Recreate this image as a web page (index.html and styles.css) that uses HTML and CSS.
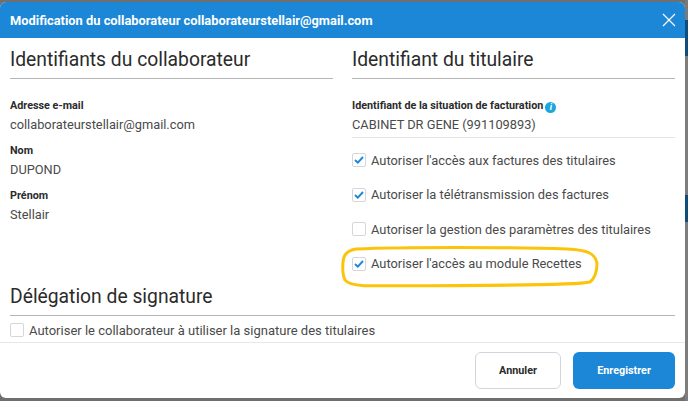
FILE: index.html
```html
<!DOCTYPE html>
<html>

<head>
  <title>Modification du collaborateur</title>
  <link rel="stylesheet" href="styles.css">
</head>

<body>
  <div class="backdrop">
    <div class="strip">
      <div class="strip-a"></div>
      <div class="strip-b"></div>
      <div class="strip-c"></div>
      <div class="strip-d"></div>
      <div class="strip-e"></div>
    </div>
  </div>

  <div class="modal">
    <div class="modal-header">
      <span class="modal-title">Modification du collaborateur collaborateurstellair@gmail.com</span>
      <svg class="close-icon" width="14" height="14" viewBox="0 0 14 14">
        <path d="M1 1L13 13M13 1L1 13" stroke="#ffffff" stroke-width="1.2" fill="none" />
      </svg>
    </div>

    <div class="modal-body">
      <div class="columns">
        <div class="column">
          <h2 class="section-title">Identifiants du collaborateur</h2>
          <div class="field field-first">
            <div class="field-label">Adresse e-mail</div>
            <div class="field-value">collaborateurstellair@gmail.com</div>
          </div>
          <div class="field">
            <div class="field-label">Nom</div>
            <div class="field-value">DUPOND</div>
          </div>
          <div class="field">
            <div class="field-label">Prénom</div>
            <div class="field-value">Stellair</div>
          </div>
        </div>

        <div class="column">
          <h2 class="section-title">Identifiant du titulaire</h2>
          <div class="field field-first field-lined">
            <div class="field-label">Identifiant de la situation de facturation<span class="info-icon">i</span></div>
            <div class="field-value">CABINET DR GENE (991109893)</div>
          </div>
          <div class="check-list">
            <div class="check-row">
              <span class="checkbox">
                <svg width="10" height="8" viewBox="0 0 10 8"><path d="M1 4L3.8 6.6L9 1" stroke="#1b87d6" stroke-width="1.9" fill="none" /></svg>
              </span>
              Autoriser l'accès aux factures des titulaires
            </div>
            <div class="check-row">
              <span class="checkbox">
                <svg width="10" height="8" viewBox="0 0 10 8"><path d="M1 4L3.8 6.6L9 1" stroke="#1b87d6" stroke-width="1.9" fill="none" /></svg>
              </span>
              Autoriser la télétransmission des factures
            </div>
            <div class="check-row">
              <span class="checkbox"></span>
              Autoriser la gestion des paramètres des titulaires
            </div>
            <div class="check-row">
              <span class="checkbox">
                <svg width="10" height="8" viewBox="0 0 10 8"><path d="M1 4L3.8 6.6L9 1" stroke="#1b87d6" stroke-width="1.9" fill="none" /></svg>
              </span>
              Autoriser l'accès au module Recettes
              <svg class="highlight" width="258" height="42" viewBox="0 0 258 42">
                <path d="M14 3C60 1 170 1 225 3C247 4 253 8 255 17C255 28 252 33 248 36C235 39 120 40 22 39.7C12 39 5 37 3 34C0 28 0 14 3 9C6 5 10 3.5 14 3Z" stroke="#fcc30b" stroke-width="3" fill="none" />
              </svg>
            </div>
          </div>
        </div>
      </div>

      <h2 class="section-title section-wide">Délégation de signature</h2>
      <div class="check-row check-row-wide">
        <span class="checkbox"></span>
        Autoriser le collaborateur à utiliser la signature des titulaires
      </div>
    </div>

    <div class="modal-footer">
      <button class="btn btn-cancel">Annuler</button>
      <button class="btn btn-save">Enregistrer</button>
    </div>
  </div>
</body>

</html>
```

FILE: styles.css
```css
body {
  margin: 0;
  width: 688px;
  height: 401px;
  overflow: hidden;
  position: relative;
  background-color: #6f6f6f;
  font-family: Roboto, "Liberation Sans", sans-serif;
  color: #3d3d3d;
}

.backdrop {
  position: absolute;
  top: 0;
  left: 0;
  width: 100%;
  height: 100%;
  display: flex;
  justify-content: flex-end;
}

.strip {
  width: 3px;
  display: flex;
  flex-direction: column;
}

.strip-a {
  height: 20px;
  background-color: #7a7a7a;
}

.strip-b {
  height: 36px;
  background-color: #0f4e7a;
}

.strip-c {
  height: 139px;
  background-color: #7d7d7d;
}

.strip-d {
  height: 27px;
  background-color: #0f4e7a;
}

.strip-e {
  flex: 1;
  background-color: #7d7d7d;
}

.modal {
  position: absolute;
  top: 2px;
  left: 0;
  width: 685px;
  height: 396px;
  background-color: #ffffff;
  border-radius: 6px;
  overflow: hidden;
  display: flex;
  flex-direction: column;
}

.modal-header {
  height: 36px;
  flex-shrink: 0;
  background-color: #1b87d6;
  display: flex;
  align-items: center;
  justify-content: space-between;
  padding: 0 9px 0 10px;
}

.modal-title {
  color: #ffffff;
  font-size: 12.87px;
  font-weight: 700;
}

.modal-body {
  flex: 1;
  padding: 9px 10px 0 10px;
  overflow: hidden;
}

.columns {
  display: flex;
  gap: 19px;
  height: 237px;
}

.column {
  width: 323px;
}

.section-title {
  margin: 0;
  padding-bottom: 5px;
  font-size: 19.3px;
  line-height: 26px;
  font-weight: 400;
  color: #2b2b2b;
  border-bottom: 1px solid #b5b5b5;
}

.field {
  margin-top: 11px;
}

.field-first {
  margin-top: 20px;
}

.field-lined {
  padding-bottom: 4px;
  border-bottom: 1px solid #e4e4e4;
}

.field-label {
  font-size: 10.8px;
  line-height: 14px;
  font-weight: 700;
  color: #2b2b2b;
}

.field-value {
  margin-top: 4px;
  font-size: 12.8px;
  line-height: 16px;
  color: #4a4a4a;
}

.info-icon {
  display: inline-block;
  width: 11px;
  height: 11px;
  margin-left: 2px;
  border-radius: 50%;
  background-color: #1ba6dc;
  color: #ffffff;
  font-size: 9px;
  line-height: 11px;
  font-style: italic;
  font-weight: 700;
  text-align: center;
  vertical-align: -1px;
}

.check-list {
  display: flex;
  flex-direction: column;
  gap: 16.6px;
  margin-top: 13px;
}

.check-row {
  position: relative;
  display: flex;
  align-items: center;
  gap: 5px;
  height: 18px;
  font-size: 12.85px;
  color: #4a4a4a;
}

.checkbox {
  width: 12px;
  height: 12px;
  flex-shrink: 0;
  border: 1px solid #d5d5dc;
  border-radius: 2px;
  display: flex;
  align-items: center;
  justify-content: center;
}

.highlight {
  position: absolute;
  top: -9px;
  left: -10px;
  overflow: visible;
}

.check-row-wide {
  margin-top: 5px;
  font-size: 13px;
}

.modal-footer {
  height: 56px;
  flex-shrink: 0;
  border-top: 1px solid #e8e8e8;
  box-sizing: border-box;
  display: flex;
  align-items: center;
  justify-content: flex-end;
  gap: 12px;
  padding-right: 10px;
}

.btn {
  height: 37px;
  border-radius: 6px;
  font-family: Roboto, "Liberation Sans", sans-serif;
  font-size: 10.8px;
  font-weight: 700;
}

.btn-cancel {
  width: 86px;
  background-color: #ffffff;
  border: 1px solid #d4d4de;
  color: #2b2b2b;
}

.btn-save {
  width: 102px;
  background-color: #1b87d6;
  border: 0;
  color: #ffffff;
}
```
